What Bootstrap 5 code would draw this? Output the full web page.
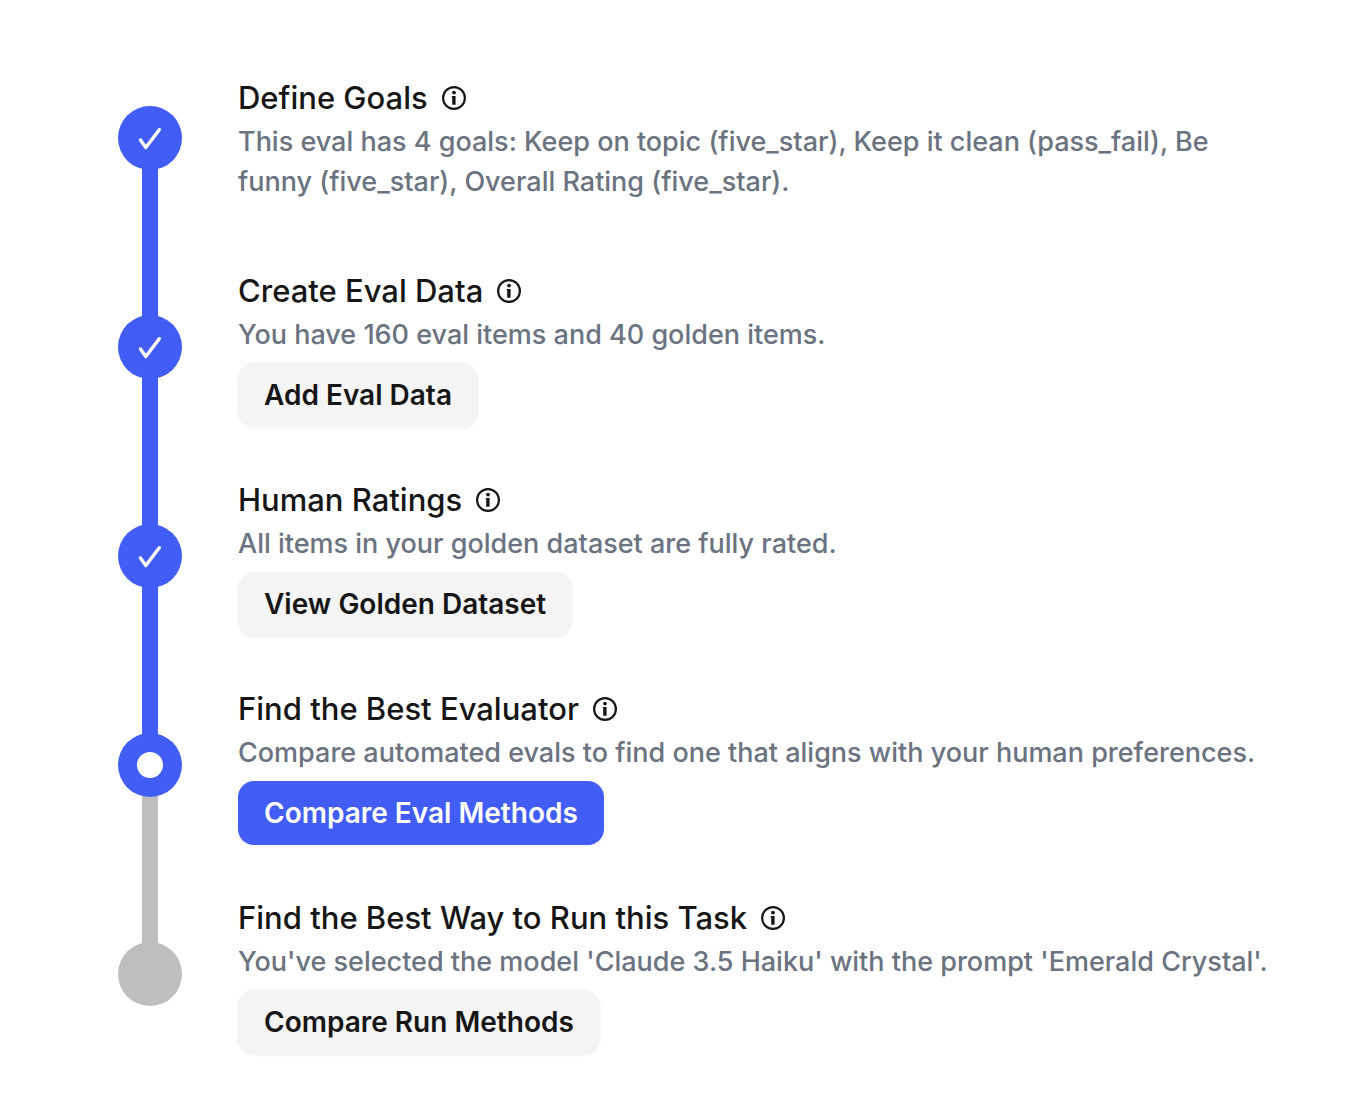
<!DOCTYPE html>
<html lang="en">
<head>
<meta charset="utf-8">
<meta name="viewport" content="width=device-width, initial-scale=1">
<title>Evaluation steps</title>
<link href="https://cdn.jsdelivr.net/npm/bootstrap@5.3.0/dist/css/bootstrap.min.css" rel="stylesheet">
<style>
  :root { --accent: #415df5; --idle: #bebebe; --ink: #161616; --soft: #6b7280; }
  body { font-family: Inter, sans-serif; color: var(--ink); background: #fff; }
  .steps { padding: 34px 92px 34px 118px; }
  .step { min-height: 209px; gap: 56px; padding-bottom: 1px; position: relative; }
  /* connector to the next step */
  .step:not(:last-child)::before {
    content: ""; position: absolute; left: 24px; top: 50%; width: 16px; height: 100%;
    background: var(--accent);
  }
  .step.current::before { background: var(--idle) !important; }
  .marker { width: 64px; height: 64px; background: var(--accent); position: relative; z-index: 1; }
  .marker.idle { background: var(--idle); }
  .marker svg { width: 64px; height: 64px; }
  .step-title { font-size: 31px; line-height: 48px; font-weight: 500; gap: 14px; }
  .step-text { font-size: 27px; line-height: 40px; font-weight: 450; color: var(--soft); }
  .info { width: 24px; height: 24px; color: var(--ink); }
  .info svg { width: 24px; height: 24px; }
  .step-btn {
    margin-top: 8px; height: 64px; padding: 0 26px; border: 0; border-radius: 16px;
    font-size: 28px; line-height: 40px; font-weight: 600;
    background: #f4f4f4; color: var(--ink); box-shadow: 0 1px 3px rgba(0,0,0,.07);
  }
  .step-btn:hover { background: #e8e8e8; color: var(--ink); }
  .step-btn.main, .step-btn.main:hover { background: var(--accent); color: #fff; }
</style>
</head>
<body>
<svg class="d-none" aria-hidden="true">
  <symbol id="tick" viewBox="0 0 64 64"><path d="M22.5 34l5.3 7.6L41.3 23.7" fill="none" stroke="#fff" stroke-width="3.4" stroke-linecap="round" stroke-linejoin="round"/></symbol>
  <symbol id="info" viewBox="0 0 24 24"><circle cx="12" cy="12" r="10.9" fill="none" stroke="currentColor" stroke-width="2.2"/><circle cx="12" cy="6.6" r="1.9" fill="currentColor"/><path d="M9.8 10h3.8v8.8h-3.4v-7.4h-.4z" fill="currentColor"/></symbol>
</svg>
<main class="steps">
  <ol class="list-unstyled m-0">
    <li class="step d-flex align-items-center">
      <span class="marker rounded-circle flex-shrink-0"><svg aria-hidden="true"><use href="#tick"/></svg></span>
      <div>
        <h2 class="step-title d-flex align-items-center m-0">Define Goals <button type="button" class="info btn p-0 border-0 d-flex" aria-label="About Define Goals"><svg><use href="#info"/></svg></button></h2>
        <p class="step-text m-0">This eval has 4 goals: Keep on topic (five_star), Keep it clean (pass_fail), Be funny (five_star), Overall Rating (five_star).</p>
      </div>
    </li>
    <li class="step d-flex align-items-center">
      <span class="marker rounded-circle flex-shrink-0"><svg aria-hidden="true"><use href="#tick"/></svg></span>
      <div>
        <h2 class="step-title d-flex align-items-center m-0">Create Eval Data <button type="button" class="info btn p-0 border-0 d-flex" aria-label="About Create Eval Data"><svg><use href="#info"/></svg></button></h2>
        <p class="step-text m-0">You have 160 eval items and 40 golden items.</p>
        <button type="button" class="step-btn btn">Add Eval Data</button>
      </div>
    </li>
    <li class="step d-flex align-items-center">
      <span class="marker rounded-circle flex-shrink-0"><svg aria-hidden="true"><use href="#tick"/></svg></span>
      <div>
        <h2 class="step-title d-flex align-items-center m-0">Human Ratings <button type="button" class="info btn p-0 border-0 d-flex" aria-label="About Human Ratings"><svg><use href="#info"/></svg></button></h2>
        <p class="step-text m-0">All items in your golden dataset are fully rated.</p>
        <button type="button" class="step-btn btn">View Golden Dataset</button>
      </div>
    </li>
    <li class="step current d-flex align-items-center" aria-current="step">
      <span class="marker rounded-circle flex-shrink-0"><svg viewBox="0 0 64 64" aria-hidden="true"><circle cx="32" cy="32" r="13" fill="#fff"/></svg></span>
      <div>
        <h2 class="step-title d-flex align-items-center m-0">Find the Best Evaluator <button type="button" class="info btn p-0 border-0 d-flex" aria-label="About Find the Best Evaluator"><svg><use href="#info"/></svg></button></h2>
        <p class="step-text m-0">Compare automated evals to find one that aligns with your human preferences.</p>
        <button type="button" class="step-btn main btn">Compare Eval Methods</button>
      </div>
    </li>
    <li class="step d-flex align-items-center">
      <span class="marker idle rounded-circle flex-shrink-0"></span>
      <div>
        <h2 class="step-title d-flex align-items-center m-0">Find the Best Way to Run this Task <button type="button" class="info btn p-0 border-0 d-flex" aria-label="About Find the Best Way to Run this Task"><svg><use href="#info"/></svg></button></h2>
        <p class="step-text m-0">You've selected the model 'Claude 3.5 Haiku' with the prompt 'Emerald Crystal'.</p>
        <button type="button" class="step-btn btn">Compare Run Methods</button>
      </div>
    </li>
  </ol>
</main>
<script src="https://cdn.jsdelivr.net/npm/bootstrap@5.3.0/dist/js/bootstrap.bundle.min.js"></script>
</body>
</html>
